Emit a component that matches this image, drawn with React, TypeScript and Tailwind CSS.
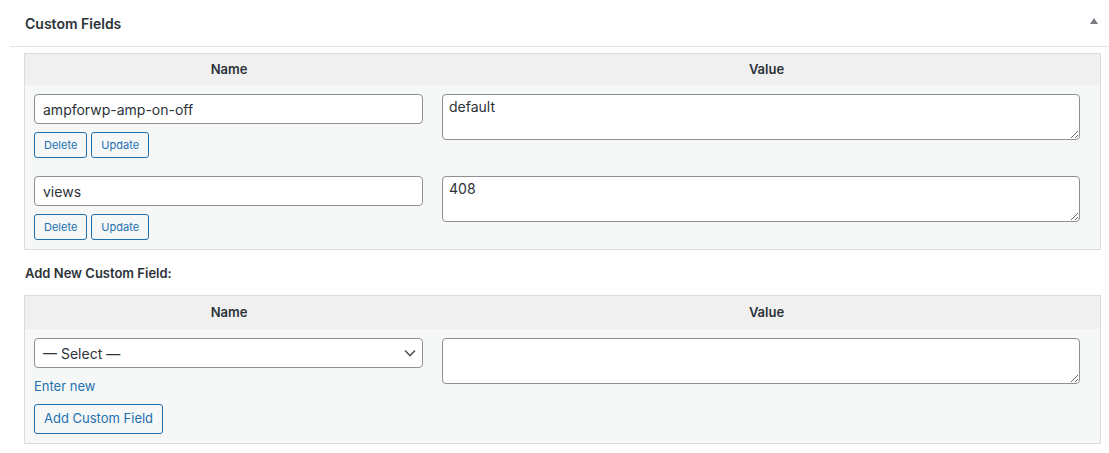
import React from "react";

function SmallBtn({ label }: { label: string }) {
  return (
    <button className="h-[26px] px-[9px] text-[11px] leading-[24px] border border-[#2271b1] text-[#2271b1] bg-[#f6f7f7] rounded-[3px]">
      {label}
    </button>
  );
}

function MetaRow({ name, value }: { name: string; value: string }) {
  return (
    <div className="flex py-[9px]">
      <div className="w-[408px] pl-[9px] shrink-0">
        <input
          defaultValue={name}
          className="block w-[389px] h-[30px] px-[8px] border border-[#8c8f94] rounded-[4px] bg-white text-[14px] text-[#2c3338] outline-none"
        />
        <div className="flex gap-[4px] mt-[8px]">
          <SmallBtn label="Delete" />
          <SmallBtn label="Update" />
        </div>
      </div>
      <div className="pl-[9px]">
        <textarea
          defaultValue={value}
          className="block w-[638px] h-[46px] px-[6px] py-[2px] leading-[20px] border border-[#8c8f94] rounded-[4px] bg-white text-[14px] text-[#2c3338] outline-none"
        />
      </div>
    </div>
  );
}

function TableHead({ h }: { h: string }) {
  return (
    <div
      className={
        "flex items-center bg-[#f0f0f1] text-[13px] font-semibold text-[#2c3338] " + h
      }
    >
      <div className="w-[408px] shrink-0 text-center">Name</div>
      <div className="flex-1 text-center">Value</div>
    </div>
  );
}

export default function App() {
  return (
    <div className="w-[1109px] h-[453px] bg-white text-[#1d2327] overflow-hidden font-[Inter,'Noto_Sans',sans-serif]">
      <div className="ml-[10px] h-[47px] border-b border-[#e2e4e7] flex items-center justify-between pl-[15px] pr-[11px]">
        <span className="text-[14px] font-semibold text-[#2c3338]">Custom Fields</span>
        <svg width="8" height="6" viewBox="0 0 8 6" className="mb-[4px]">
          <polygon points="4,0 8,6 0,6" fill="#787c82" />
        </svg>
      </div>

      <div className="pl-[24px] pr-[8px] pt-[6px]">
        <div className="border border-[#dcdcde] bg-[#f6f7f7]">
          <TableHead h="h-[31px]" />
          <MetaRow name="ampforwp-amp-on-off" value="default" />
          <MetaRow name="views" value="408" />
        </div>

        <div className="mt-[13px] mb-[12px] h-[20px] leading-[20px] text-[13px] font-semibold text-[#2c3338] pl-[1px]">
          Add New Custom Field:
        </div>

        <div className="border border-[#dcdcde] bg-[#f6f7f7]">
          <TableHead h="h-[33px]" />
          <div className="flex py-[9px]">
            <div className="w-[408px] pl-[9px] shrink-0">
              <div className="relative w-[389px] h-[30px]">
                <select className="appearance-none block w-full h-full pl-[8px] pr-[24px] border border-[#8c8f94] rounded-[4px] bg-white text-[14px] text-[#2c3338] outline-none">
                  <option>— Select —</option>
                </select>
                <svg
                  width="12"
                  height="8"
                  viewBox="0 0 12 8"
                  className="absolute right-[7px] top-[11px] pointer-events-none"
                >
                  <polyline points="1,1.5 6,6.5 11,1.5" fill="none" stroke="#50575e" strokeWidth="1.6" />
                </svg>
              </div>
              <div className="mt-[8px] h-[20px] leading-[20px] text-[13px] text-[#2271b1]">Enter new</div>
              <button className="mt-[8px] h-[30px] px-[9px] text-[13px] border border-[#2271b1] text-[#2271b1] bg-[#f6f7f7] rounded-[3px]">
                Add Custom Field
              </button>
            </div>
            <div className="pl-[9px]">
              <textarea className="block w-[638px] h-[46px] px-[6px] py-[2px] leading-[20px] border border-[#8c8f94] rounded-[4px] bg-white text-[14px] text-[#2c3338] outline-none" />
            </div>
          </div>
        </div>
      </div>
    </div>
  );
}
